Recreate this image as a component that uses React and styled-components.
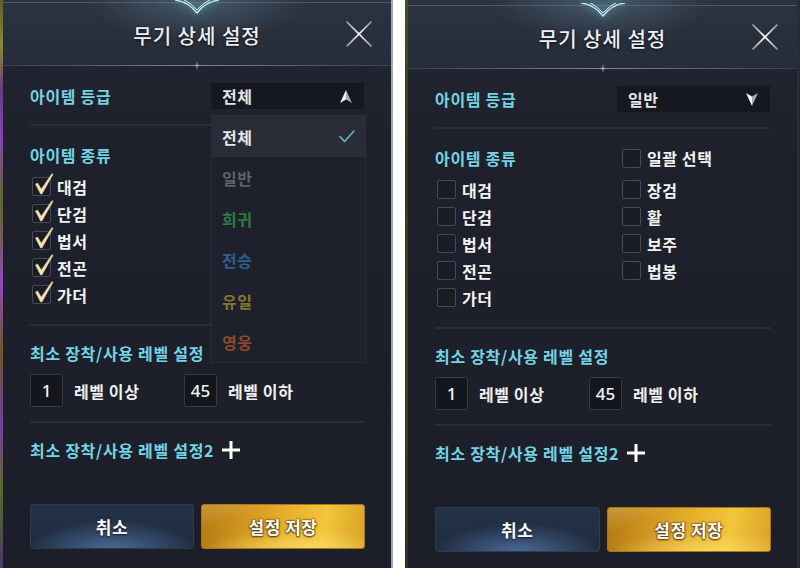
import React from 'react';
import styled, { createGlobalStyle } from 'styled-components';

const Global = createGlobalStyle`
  html, body { margin: 0; padding: 0; background: #fff; }
  body { font-family: "Noto Sans CJK KR", "Noto Sans", sans-serif; }
  * { box-sizing: border-box; }
`;

const Page = styled.div`
  display: flex;
  width: 800px;
  height: 568px;
  overflow: hidden;
  background: #fff;
`;

const Frame = styled.div`
  display: flex;
  height: 568px;
`;

const Strip = styled.div`
  width: ${p => p.w}px;
  flex: none;
  background: ${p => p.bg};
`;

const Gap = styled.div`
  width: 12px;
  flex: none;
  background: #fff;
`;

const Panel = styled.section`
  position: relative;
  width: ${p => p.w}px;
  height: 568px;
  flex: none;
  display: flex;
  flex-direction: column;
  background: linear-gradient(#232734 0, #1e212b 150px, #1c1f29 100%);
  overflow: hidden;
`;

const Header = styled.header`
  position: relative;
  height: ${p => 66 + p.shift}px;
  padding-top: ${p => p.shift}px;
  display: grid;
  grid-template-columns: 1fr auto 1fr;
  align-items: center;
  background:
    radial-gradient(ellipse 150px 55px at 50% 0, rgba(120, 175, 195, 0.32), transparent 75%),
    linear-gradient(#2c3240, #272c39);
  &::before {
    content: "";
    position: absolute;
    left: 0; right: 0; top: ${p => 2 + p.shift}px;
    height: 1px;
    background: rgba(120, 130, 150, 0.45);
  }
  &::after {
    content: "";
    position: absolute;
    left: 0; right: 0; bottom: 0;
    height: 1px;
    background: linear-gradient(90deg, rgba(90,100,120,.35), rgba(160,170,190,.7) 50%, rgba(90,100,120,.35));
  }
`;

const Ornament = styled.svg`
  position: absolute;
  left: 50%;
  top: ${p => p.shift}px;
  transform: translateX(-50%);
  filter: drop-shadow(0 0 4px rgba(140, 220, 240, 0.8));
`;

const Star = styled.svg`
  position: absolute;
  left: 50%;
  bottom: -4px;
  transform: translateX(-50%);
`;

const Title = styled.h1`
  grid-column: 2;
  margin: 0;
  padding-top: 4px;
  font-size: 20px;
  font-weight: 500;
  color: #eef0f4;
  letter-spacing: 1px;
  text-shadow: 0 1px 3px rgba(0, 0, 0, 0.7);
`;

const Close = styled.svg`
  grid-column: 3;
  justify-self: end;
  margin-right: 19px;
  margin-top: 1px;
`;

const Body = styled.div`
  display: flex;
  flex-direction: column;
  padding: 0 26px 0 27px;
`;

const GradeRow = styled.div`
  display: flex;
  justify-content: space-between;
  align-items: center;
  height: 28px;
  margin-top: 16px;
`;

const Label = styled.div`
  font-size: 16px;
  font-weight: 700;
  letter-spacing: 0.7px;
  line-height: 20px;
  color: #74d3e4;
  margin-top: ${p => p.mt || 0}px;
  display: flex;
  align-items: center;
  gap: 8px;
`;

const Select = styled.div`
  width: 155px;
  height: 28px;
  display: flex;
  align-items: center;
  justify-content: space-between;
  padding: 0 12px 0 11px;
  background: #151820;
  border: 1px solid #20232b;
  font-size: 16px;
  font-weight: 700;
  letter-spacing: 0.5px;
  color: #e4e5e8;
`;

const Divider = styled.div`
  height: 2px;
  background: #2b2e37;
  margin-top: ${p => p.mt}px;
`;

const CheckGrid = styled.div`
  display: grid;
  grid-template-columns: 185px 1fr;
  grid-auto-rows: ${p => p.rh}px;
  align-items: center;
  margin-top: ${p => p.mt || 0}px;
`;

const Item = styled.label`
  display: flex;
  align-items: center;
  gap: 6px;
  padding-left: 2px;
  grid-column: ${p => p.col || 'auto'};
  font-size: 16px;
  font-weight: 700;
  letter-spacing: 0.6px;
  color: #f3f3f3;
`;

const Box = styled.span`
  position: relative;
  width: 19px;
  height: 19px;
  flex: none;
  border: 1.5px solid #464a54;
  border-radius: 2px;
  background: #1a1d25;
`;

const Tick = styled.svg`
  position: absolute;
  left: 1px;
  top: -6px;
  overflow: visible;
`;

const LevelRow = styled.div`
  display: grid;
  grid-template-columns: 154px auto;
  margin-top: 11px;
`;

const LevelGroup = styled.div`
  display: flex;
  align-items: center;
  gap: 11px;
  font-size: 16px;
  font-weight: 700;
  letter-spacing: 0.6px;
  color: #f0f0f0;
`;

const NumBox = styled.div`
  width: 33px;
  height: 33px;
  display: flex;
  align-items: center;
  justify-content: center;
  background: #13161d;
  border: 1.5px solid #353944;
  border-radius: 2px;
  font-family: "Noto Sans", sans-serif;
  font-size: 17px;
  font-weight: 500;
  letter-spacing: 0;
  color: #f4f4f4;
`;

const Buttons = styled.div`
  display: grid;
  grid-template-columns: 1fr 1fr;
  gap: 7px;
  margin-top: 44px;
  height: 45px;
`;

const Button = styled.button`
  border-radius: 3px;
  font-family: "Noto Sans CJK KR", sans-serif;
  font-size: 17px;
  font-weight: 700;
  letter-spacing: 0.5px;
  color: #fff;
  cursor: pointer;
  ${p => p.primary ? `
    border: 1px solid #a8781a;
    background:
      linear-gradient(160deg, rgba(255,240,180,.25) 0%, transparent 25%),
      radial-gradient(ellipse 120px 30px at 60% 110%, rgba(255,230,120,.7), transparent 80%),
      linear-gradient(100deg, #b47812 0%, #d49a22 30%, #e9b42e 55%, #f2c53a 75%, #d9a226 100%);
    text-shadow: 0 0 2px #5a3a08, 0 0 2px #5a3a08, 0 1px 2px #5a3a08;
  ` : `
    border: 1px solid #2e3b50;
    background:
      radial-gradient(ellipse 100px 35px at 50% 105%, rgba(85,125,175,.8), transparent 85%),
      linear-gradient(#243248, #1f2b3e);
    text-shadow: 0 1px 2px rgba(0,0,0,.7);
  `}
`;

const Menu = styled.ul`
  position: absolute;
  left: 208px;
  top: 115px;
  width: 155px;
  margin: 0;
  padding: 0;
  list-style: none;
  background: #1e212b;
  border: 1px solid #2a2d36;
`;

const MenuItem = styled.li`
  height: 41px;
  display: flex;
  align-items: center;
  justify-content: space-between;
  padding: 0 10px 0 10px;
  font-size: 16px;
  font-weight: 700;
  letter-spacing: 0.5px;
  color: ${p => p.color};
  background: ${p => p.active ? '#2a2d38' : 'transparent'};
`;

const ArrowUp = () => (
  <svg width="12" height="13" viewBox="0 0 12 13">
    <defs>
      <linearGradient id="ag" x1="0" x2="1">
        <stop offset="0" stopColor="#f2f3f5" />
        <stop offset="0.5" stopColor="#f2f3f5" />
        <stop offset="0.5" stopColor="#a7abb3" />
        <stop offset="1" stopColor="#a7abb3" />
      </linearGradient>
    </defs>
    <path d="M6 0 L12 13 L6 9.5 L0 13 Z" fill="url(#ag)" />
  </svg>
);

const ArrowDown = () => (
  <svg width="12" height="13" viewBox="0 0 12 13">
    <defs>
      <linearGradient id="agd" x1="0" x2="1">
        <stop offset="0" stopColor="#f2f3f5" />
        <stop offset="0.5" stopColor="#f2f3f5" />
        <stop offset="0.5" stopColor="#a7abb3" />
        <stop offset="1" stopColor="#a7abb3" />
      </linearGradient>
    </defs>
    <path d="M0 0 L6 3.5 L12 0 L6 13 Z" fill="url(#agd)" />
  </svg>
);

const CloseIcon = () => (
  <Close width="26" height="26" viewBox="0 0 26 26">
    <defs>
      <linearGradient id="cx" x1="0" y1="0" x2="1" y2="1">
        <stop offset="0" stopColor="#9aa0aa" />
        <stop offset="0.5" stopColor="#ffffff" />
        <stop offset="1" stopColor="#9aa0aa" />
      </linearGradient>
      <linearGradient id="cx2" x1="1" y1="0" x2="0" y2="1">
        <stop offset="0" stopColor="#9aa0aa" />
        <stop offset="0.5" stopColor="#ffffff" />
        <stop offset="1" stopColor="#9aa0aa" />
      </linearGradient>
    </defs>
    <path d="M1 1 L25 25" stroke="url(#cx)" strokeWidth="1.7" strokeLinecap="round" />
    <path d="M25 1 L1 25" stroke="url(#cx2)" strokeWidth="1.7" strokeLinecap="round" />
  </Close>
);

const PlusIcon = () => (
  <svg width="18" height="18" viewBox="0 0 18 18">
    <rect x="7.5" y="0" width="3" height="18" fill="#fff" />
    <rect x="0" y="7.5" width="18" height="3" fill="#fff" />
  </svg>
);

const MenuCheck = () => (
  <svg width="16" height="13" viewBox="0 0 16 13">
    <path d="M1 6.5 L5.5 11.5 L15 1" fill="none" stroke="#62bccb" strokeWidth="1.6" strokeLinecap="round" strokeLinejoin="round" />
  </svg>
);

const CheckBox = ({ checked }) => (
  <Box>
    {checked && (
      <Tick width="20" height="24" viewBox="0 0 22 24">
        <path d="M1.5 12 L4 10.8 L8 17.5 L19.8 0.5 L21 1.3 L8.8 23 L7.2 23 Z" fill="#f2e2b4" stroke="#d9c48e" strokeWidth="0.5" strokeLinejoin="round" />
      </Tick>
    )}
  </Box>
);

const leftWeapons = ['대검', '단검', '법서', '전곤', '가더'];
const rightWeapons = ['장검', '활', '보주', '법봉'];

const grades = [
  { t: '전체', c: '#e6e7ea', active: true },
  { t: '일반', c: '#5f6268' },
  { t: '희귀', c: '#2b7c44' },
  { t: '전승', c: '#2e6190' },
  { t: '유일', c: '#857534' },
  { t: '영웅', c: '#8a4a27' },
];

const Dialog = ({ width, shift, open }) => (
  <Panel w={width}>
    <Header shift={shift}>
      <Ornament shift={shift} width="44" height="14" viewBox="0 0 44 14">
        <path d="M0 0 C9 1 16 5 22 13 C28 5 35 1 44 0" fill="none" stroke="#bfeaf2" strokeWidth="1.3" />
        <path d="M9 0 C14 2 18 6 22 10 C26 6 30 2 35 0" fill="none" stroke="#d8f4fa" strokeWidth="1" />
      </Ornament>
      <Title>무기 상세 설정</Title>
      <CloseIcon />
      <Star width="9" height="9" viewBox="0 0 9 9">
        <path d="M4.5 0 L5.3 3.7 L9 4.5 L5.3 5.3 L4.5 9 L3.7 5.3 L0 4.5 L3.7 3.7 Z" fill="#8c95a6" />
      </Star>
    </Header>
    <Body>
      <GradeRow>
        <Label>아이템 등급</Label>
        <Select>
          <span>{open ? '전체' : '일반'}</span>
          {open ? <ArrowUp /> : <ArrowDown />}
        </Select>
      </GradeRow>
      <Divider mt={14} />
      {open ? (
        <Label mt={19}>아이템 종류</Label>
      ) : (
        <CheckGrid rh={20} mt={19}>
          <Label>아이템 종류</Label>
          <Item col={2}><CheckBox />일괄 선택</Item>
        </CheckGrid>
      )}
      <CheckGrid rh={27} mt={8}>
        {leftWeapons.map((w, i) => (
          <React.Fragment key={w}>
            <Item col={1}><CheckBox checked={open} />{w}</Item>
            {!open && rightWeapons[i] && <Item col={2}><CheckBox />{rightWeapons[i]}</Item>}
          </React.Fragment>
        ))}
      </CheckGrid>
      <Divider mt={16} />
      <Label mt={17}>최소 장착/사용 레벨 설정</Label>
      <LevelRow>
        <LevelGroup><NumBox>1</NumBox>레벨 이상</LevelGroup>
        <LevelGroup><NumBox>45</NumBox>레벨 이하</LevelGroup>
      </LevelRow>
      <Divider mt={14} />
      <Label mt={17}>최소 장착/사용 레벨 설정2 <PlusIcon /></Label>
      <Buttons>
        <Button>취소</Button>
        <Button primary>설정 저장</Button>
      </Buttons>
    </Body>
    {open && (
      <Menu>
        {grades.map(g => (
          <MenuItem key={g.t} color={g.c} active={g.active}>
            <span>{g.t}</span>
            {g.active && <MenuCheck />}
          </MenuItem>
        ))}
      </Menu>
    )}
  </Panel>
);

export default function App() {
  return (
    <>
      <Global />
      <Page>
        <Frame>
          <Strip w={3} bg="linear-gradient(#5e5e22 0%, #8a8a2e 8%, #6a3a8a 16%, #8a40b8 24%, #5a6a22 36%, #9a44c4 50%, #6a5a22 62%, #7a3aa8 74%, #5a6a24 86%, #4a3a6a 100%)" />
          <Dialog width={388} shift={0} open />
          <Strip w={2} bg="#a3a7ae" />
        </Frame>
        <Gap />
        <Frame>
          <Strip w={3} bg="linear-gradient(#4a4a24, #2e3a1e 30%, #3a4424 60%, #2a3320)" />
          <Dialog width={389} shift={3} open={false} />
          <Strip w={3} bg="linear-gradient(90deg, #1c1f29, #333742 40%, #1c1f29)" />
        </Frame>
      </Page>
    </>
  );
}
